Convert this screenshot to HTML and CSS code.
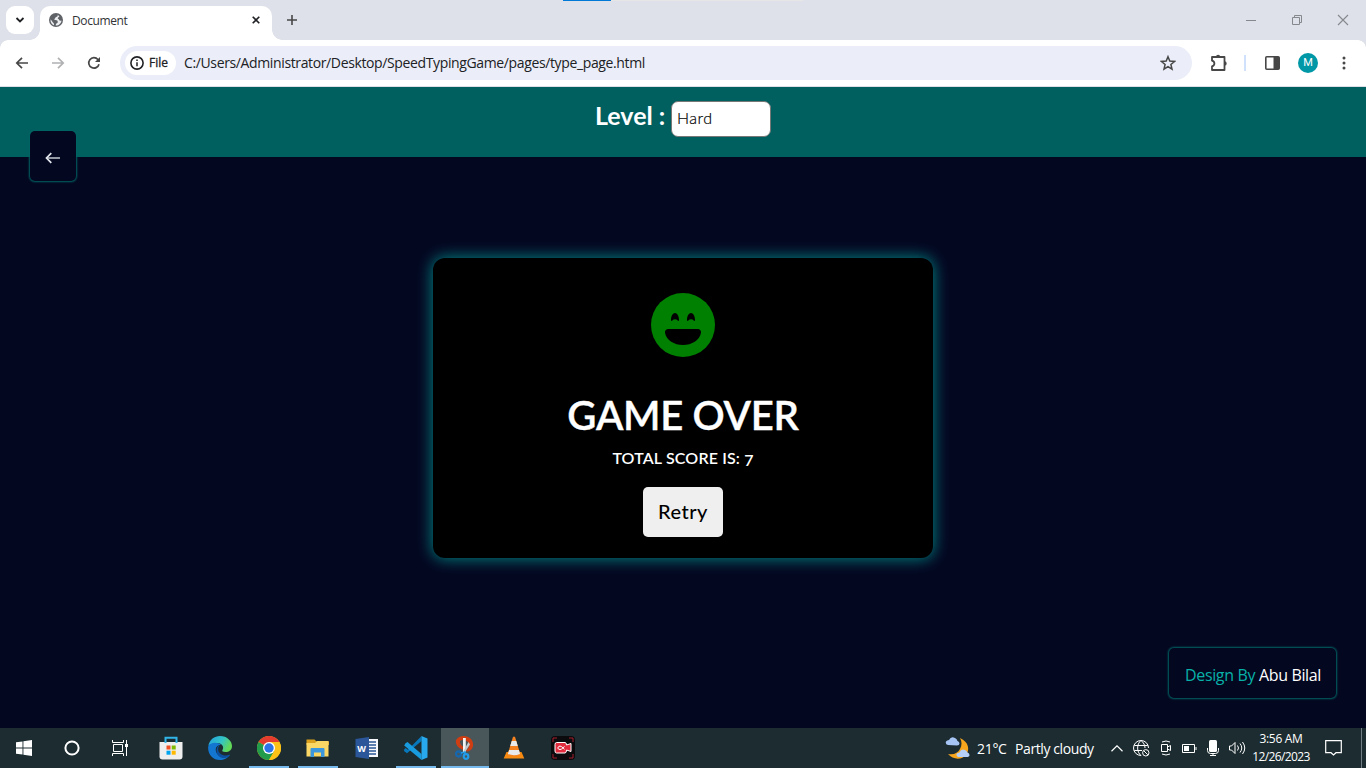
FILE: index.html
```html
<!DOCTYPE html>
<html lang="en">
<head>
<meta charset="utf-8">
<title>Document</title>
<link rel="stylesheet" href="styles.css">
</head>
<body>
<header class="tabstrip">
  <div class="tab-search"><svg width="10" height="6" viewBox="0 0 10 6"><path d="M1.500 1l3.500 3.500L8.500 1" fill="none" stroke="#202124" stroke-width="1.800"/></svg></div>
  <div class="tab">
    <svg class="globe" width="14" height="14" viewBox="0 0 14 14"><circle cx="7" cy="7" r="7" fill="#5f6368"/><path d="M8.300 1.500C9.300 2.300 8.800 3.600 7.300 4c-1 .3-.9 1.200-1.600 1.700-.8.500-.3 1.300.8 1.300 1.600 0 2.300.8 2.300 1.900 0 1.200-1.500 1.200-1.800 2.200l-.3 1.300c3 .2 5.600-2 5.800-5-.9.600-2.200.3-2.400-.6-.2-1-1.300-.7-1.300-1.600 0-.8 1.300-.9 1.600-1.900zM1.500 6.500C1.300 9.300 2.900 11.500 5 12.200c.2-1.200-.1-2-.8-2.500C3.200 9 3 7.600 1.500 6.500z" fill="#eceef0"/></svg>
    <span class="tab-title">Document</span>
    <svg class="tab-close" width="8" height="8" viewBox="0 0 8 8"><path d="M.7.700l6.600 6.600M7.300.700L.7 7.300" stroke="#202124" stroke-width="1.600"/></svg>
  </div>
  <svg class="new-tab" width="12" height="12" viewBox="0 0 12 12"><path d="M6 1v10M1 6h10" stroke="#474747" stroke-width="1.600"/></svg>
  <div class="load-line"><i></i></div>
  <div class="window-buttons">
    <svg width="12" height="12" viewBox="0 0 12 12"><path d="M1 6.500h10" stroke="#85888d"/></svg>
    <svg width="12" height="12" viewBox="0 0 12 12"><path d="M1.500 3.500h7v7h-7zM3.500 3.500v-2h7v7h-2" fill="none" stroke="#85888d"/></svg>
    <svg width="12" height="12" viewBox="0 0 12 12"><path d="M1 1l10 10M11 1L1 11" stroke="#85888d" stroke-width="1.100"/></svg>
  </div>
</header>

<nav class="toolbar">
  <svg class="nav-icon" width="14" height="12" viewBox="0 0 14 12"><path d="M13 6H2M7 .8L1.800 6 7 11.200" fill="none" stroke="#474747" stroke-width="1.700"/></svg>
  <svg class="nav-icon" width="14" height="12" viewBox="0 0 14 12"><path d="M1 6h11M7 .8L12.200 6 7 11.200" fill="none" stroke="#b0b1b3" stroke-width="1.700"/></svg>
  <svg class="nav-icon" width="14" height="14" viewBox="0 0 14 14"><path d="M12 8.200A5.200 5.200 0 1 1 10.900 3.500L12.500 5" fill="none" stroke="#474747" stroke-width="1.700"/><path d="M13 1v5H8z" fill="#474747"/></svg>
  <div class="omnibox">
    <div class="file-chip">
      <svg width="14" height="14" viewBox="0 0 14 14"><circle cx="7" cy="7" r="6.100" fill="none" stroke="#202124" stroke-width="1.600"/><path d="M7 6.300v4M7 3.400v1.600" stroke="#202124" stroke-width="1.500"/></svg>
      <span>File</span>
    </div>
    <span class="url">C:/Users/Administrator/Desktop/SpeedTypingGame/pages/type_page.html</span>
    <svg class="star" width="16" height="16" viewBox="0 0 16 16"><path d="M8 1.700l1.800 4.400 4.700.4-3.600 3 1.100 4.700L8 11.700l-4 2.500 1.100-4.700-3.600-3 4.700-.4z" fill="none" stroke="#474747" stroke-width="1.500"/></svg>
  </div>
  <svg class="puzzle" width="18" height="18" viewBox="0 0 18 18"><path d="M2 3h12.500v13H2v-3.600c3.200-1 3.200-4.800 0-5.700z" fill="none" stroke="#474747" stroke-width="1.800" stroke-linejoin="round"/><path d="M6 3a2.100 2.300 0 0 1 4.200 0zM14.500 7.200a2.200 2.200 0 0 1 0 4.400z" fill="#474747"/></svg>
  <i class="divider"></i>
  <svg class="panel" width="15" height="14" viewBox="0 0 15 14"><rect x=".8" y=".8" width="13.400" height="12.400" rx="1" fill="none" stroke="#474747" stroke-width="1.600"/><path d="M8.500 1H14v12H8.500z" fill="#474747"/></svg>
  <span class="avatar">M</span>
  <svg class="menu" width="4" height="14" viewBox="0 0 4 14"><g fill="#474747"><circle cx="2" cy="2" r="1.500"/><circle cx="2" cy="7" r="1.500"/><circle cx="2" cy="12" r="1.500"/></g></svg>
</nav>

<main class="page">
  <div class="level-bar">
    <span class="level-label">Level :</span>
    <div class="level-select">Hard</div>
  </div>
  <div class="back"><svg width="16" height="12" viewBox="0 0 16 12"><path d="M15 6H2.500" stroke="#aeb4bd" stroke-width="1.700"/><path d="M6.300 1.200L1.500 6l4.800 4.800" fill="none" stroke="#e4e8ee" stroke-width="1.700"/></svg></div>
  <section class="card">
    <svg class="smile" width="64" height="64" viewBox="0 0 64 64"><circle cx="32" cy="32" r="32" fill="#008000"/><path d="M17.500 36h29c2.500 0 4 1.800 3.400 4.200C48.500 47 41 52 32 52s-16.500-5-17.900-11.800C13.500 37.800 15 36 17.500 36zM20 27c0-4 1.800-7 4-7s4 3 4 7c0 1-.7 1.200-1.300.6-1.400-1.700-4-1.700-5.400 0-.6.6-1.300.4-1.300-.6zM36 27c0-4 1.800-7 4-7s4 3 4 7c0 1-.7 1.200-1.300.6-1.400-1.700-4-1.700-5.400 0-.6.6-1.300.4-1.300-.6z" fill="#000"/></svg>
    <h1>GAME OVER</h1>
    <p class="score">TOTAL SCORE IS: <span class="digit">7</span></p>
    <button class="retry">Retry</button>
  </section>
  <div class="credit"><span>Design By</span> Abu Bilal</div>
</main>

<footer class="taskbar">
  <div class="task sys"><svg width="16" height="16" viewBox="0 0 16 16"><path d="M0 2.300L6.500 1.400v6.100H0zM7.400 1.200L16 0v7.500H7.400zM0 8.500h6.500v6.100L0 13.700zM7.400 8.500H16V16l-8.600-1.200z" fill="#fff"/></svg></div>
  <div class="task sys"><svg width="16" height="16" viewBox="0 0 16 16"><circle cx="8" cy="8" r="6.600" fill="none" stroke="#fff" stroke-width="2"/></svg></div>
  <div class="task sys"><svg width="17" height="16" viewBox="0 0 17 16"><path d="M1.500 4.500h9v7h-9zM.5 0v2.500h11V0M.5 16v-2.500h11V16M14.500 0v16" fill="none" stroke="#fff"/><path d="M13 4h3v3h-3z" fill="#fff"/></svg></div>
  <div class="task store"><svg width="24" height="24" viewBox="0 0 24 24"><path d="M.5 6h23v14.500q0 3-3 3h-17q-3 0-3-3z" fill="#eeeeef"/><path d="M6.500 7V1.800h11V7" fill="none" stroke="#32b5e8" stroke-width="2"/><path d="M7.500 9.500h4v4h-4z" fill="#f25022"/><path d="M12.700 9.500h4v4h-4z" fill="#7fba00"/><path d="M7.500 14.700h4v4h-4z" fill="#00a4ef"/><path d="M12.700 14.700h4v4h-4z" fill="#ffb900"/></svg></div>
  <div class="task"><svg width="24" height="24" viewBox="0 0 24 24"><defs><linearGradient id="edge" x2="1" y2=".4"><stop stop-color="#229fe0"/><stop offset=".6" stop-color="#33c4c6"/><stop offset="1" stop-color="#62d858"/></linearGradient></defs><path d="M.3 10C1.500 3.500 6.500 0 12 0c7 0 12 5 12 10 0 4-3 6-6.500 6-2.500 0-4-1-3-2 2-3-.5-7-5-7C5 7 1 9 .3 10z" fill="url(#edge)"/><path d="M.2 10.500C1.500 6.500 10 5.500 13 9c-4 0-6 3-5 6.500 1.200 4.500 7 7 14 3C19.500 22.500 16 24 12 24 4.500 24-.5 18 .2 10.500z" fill="#1377d1"/><path d="M10.500 9.700C7 12.500 8 21 14.500 22c3 .4 6-1 7.700-3.300-6 2.300-12-.5-12-5.700 0-1.500.6-2.700 1.500-3.500z" fill="#0c4f9f"/></svg></div>
  <div class="task open"><svg width="24" height="24" viewBox="0 0 24 24"><circle cx="12" cy="12" r="12" fill="#fbc116"/><path d="M12 12L1.600 6A12 12 0 0 1 22.400 6z" fill="#e33b2e"/><path d="M12 12L1.600 6A12 12 0 0 0 12 24l5.200-9z" fill="#229b4a"/><path d="M12 6h10.400A12 12 0 0 1 12 24l5.500-9z" fill="#fbc116"/><circle cx="12" cy="12" r="6" fill="#fff"/><circle cx="12" cy="12" r="4.700" fill="#2c73e8"/></svg></div>
  <div class="task open"><svg width="23" height="20" viewBox="0 0 23 20"><path d="M.5 1.500h8l2 2H23V7H.5z" fill="#dca11c"/><path d="M.5 5H9l2-2h11.500v15.500H.5z" fill="#fbd766"/><path d="M4.500 19v-8q0-1 1-1h12q1 0 1 1v8H15v-4.500H8V19z" fill="#3d97dc"/></svg></div>
  <div class="task"><svg width="24" height="24" viewBox="0 0 24 24"><path d="M12 3h11v18H12z" fill="#f7f9fc"/><path d="M14 6h7M14 9h7M14 12h7M14 15h7M14 18h7" stroke="#2b5797" stroke-width="1.300"/><path d="M.5 3L14 1v22L.5 21z" fill="#2b579a"/><text class="word-letter" x="2.300" y="15.700">W</text></svg></div>
  <div class="task open"><svg width="24" height="24" viewBox="0 0 24 24"><path d="M17.500 0L4 13.800 1.500 11.900.2 13.300 0 15l3 2.300L17.500 5z" fill="#0878bc"/><path d="M1.500 7.200L3.500 6l14 12v6L.2 9.500z" fill="#199bdf"/><path d="M17.500 0l6 2.600v18.800l-6 2.600z" fill="#28a9ed"/></svg></div>
  <div class="task open active"><svg width="20" height="24" viewBox="0 0 20 24"><path d="M1 4C4-1 12-1 16 3c4 5 2 11-3 12.500l-3-.5c4-2 5-6 3-9-2-2-6-3-8-1 0 3 1 5 4 6v3C4 13 0 9 1 4z" fill="#cf3e12"/><path d="M8 2h2.800v14H8z" fill="#f2f3f3"/><path d="M13.500 6l1.500 2.500L9.500 17l-1-2z" fill="#c3c8ca"/><circle cx="3.500" cy="18" r="2.500" fill="none" stroke="#1767ae" stroke-width="2.300"/><circle cx="11" cy="20.500" r="2.300" fill="none" stroke="#219cea" stroke-width="2.200"/><path d="M6 17l4-1v3" fill="none" stroke="#219cea" stroke-width="1.500"/></svg></div>
  <div class="task vlc"><svg width="22" height="24" viewBox="0 0 22 24"><path d="M3.500 16h15l2.800 6.500H.7z" fill="#f78b12"/><path d="M10 .8h2l5.500 18q-6.500 3-13 0z" fill="#f58220"/><path d="M8.700 5h4.600l1.500 5H7.200zM6.100 14h9.800l1.200 4q-6.100 2.400-12.200 0z" fill="#e8eaec"/></svg></div>
  <div class="task"><svg width="24" height="24" viewBox="0 0 24 24"><rect width="24" height="24" rx="4" fill="#0b0b0d"/><path d="M2 6V2h4M18 2h4v4M2 18v4h4M18 22h4v-4" fill="none" stroke="#a51e2d"/><path d="M5.500 6.500H14q1.500 0 1.500 2.500l4.500-1.500v8L15.500 14q0 3-1.500 3H5.500q-1.500 0-1.500-2V8.500q0-2 1.500-2z" fill="#e22c3e" stroke="#fff"/><path d="M10.500 10.700q-1.500-1.400-3 0t0 2.400 3 0l3-2.600M10.500 10.500l3 2.800" fill="none" stroke="#fff"/></svg></div>

  <div class="weather">
    <svg width="25" height="23" viewBox="0 0 25 23"><path d="M15 1c9 4 10 12 6 17s-13 5-18-1c6 1 10-1 12-5s2-7 0-11z" fill="#f6a51d"/><path d="M3 8q-3-1-2-3.500Q2 3 4 3 6-1 10 1q2 1 2.500 3 2 .5 2 2.500T12 8.500z" fill="#a6c4f4"/><path d="M13 20q-2-1-1.500-3 1-1.500 3-1.500 1.500-4 5.500-2.500 2 1 2.500 2.500 2 .5 2 2.500t-3 2z" fill="#b5cff6"/></svg>
    <span class="temp">21°C</span><span class="sky">Partly cloudy</span>
  </div>
  <div class="tray">
    <svg width="12" height="7" viewBox="0 0 12 7"><path d="M.5 6.200L6 .8l5.500 5.400" fill="none" stroke="#fff" stroke-width="1.200"/></svg>
    <svg width="17" height="17" viewBox="0 0 17 17"><g fill="none" stroke="#fff"><path d="M8 15.500A7.500 7.500 0 1 1 15.500 8M8 15.500C3.500 12 3.500 4 8 .5c2.800 2 4 5 4 7.500M1.300 5.500h13.500M1.300 10.500H9"/><circle cx="12.800" cy="12.800" r="3.200"/><path d="M10.800 10.800l4 4"/></g></svg>
    <svg width="12" height="16" viewBox="0 0 12 16"><path d="M1.500 4.500h6v7h-6zM7.500 7l3-1.500v5l-3-1.500M2 2q4-2 8 0M2 14q4 2 8 0" fill="none" stroke="#fff"/></svg>
    <svg width="15" height="9" viewBox="0 0 15 9"><path d="M.5.500h12v8H.5zM14 3v3" fill="none" stroke="#fff"/><path d="M2 2h5v5H2z" fill="#fff"/></svg>
    <svg width="12" height="16" viewBox="0 0 12 16"><rect x="2" width="8" height="12" rx="1.500" fill="#fff"/><path d="M.5 8v2.500q0 3 3 3h5q3 0 3-3V8M6 13v2.500M3 15.500h6" fill="none" stroke="#fff"/></svg>
    <svg width="17" height="14" viewBox="0 0 17 14"><path d="M.5 5h2L6 1.500v11L2.500 9h-2zM8.500 4.500q2 2.500 0 5M11 2.500q3.500 4.500 0 9M13.500 1q4.500 6 0 12" fill="none" stroke="#fff"/></svg>
  </div>
  <div class="clock"><span class="time">3:56 AM</span><span class="date">12/26/2023</span></div>
  <svg class="notice" width="17" height="16" viewBox="0 0 17 16"><path d="M.7.700h15.600v12H11L8.500 15 6 12.700H.7z" fill="none" stroke="#fff" stroke-width="1.200"/></svg>
  <i class="desktop-edge"></i>
</footer>
</body>
</html>
```
FILE: styles.css
```css
* { box-sizing: border-box; }
body { margin: 0; width: 1366px; height: 768px; overflow: hidden; display: flex; flex-direction: column; font-family: "Open Sans", "Noto Sans", sans-serif; background: #040720; }
svg { display: block; flex: none; }

.tabstrip { position: relative; height: 40px; flex: none; display: flex; align-items: center; padding-left: 6px; background: #dee1e9; }
.tab-search { width: 28px; height: 28px; border-radius: 9px; background: #fff; display: flex; align-items: center; justify-content: center; }
.tab { position: relative; align-self: flex-end; width: 232px; height: 34px; margin-left: 6px; padding: 0 12px 6px 9px; display: flex; align-items: center; background: #fff; border-radius: 10px 10px 0 0; }
.tab::before, .tab::after { content: ""; position: absolute; bottom: 0; width: 10px; height: 10px; }
.tab::before { left: -10px; background: radial-gradient(circle at 0 0, transparent 9.500px, #fff 10px); }
.tab::after { right: -10px; background: radial-gradient(circle at 100% 0, transparent 9.500px, #fff 10px); }
.tab-title { margin-left: 9px; padding-top: 1px; font-size: 12px; line-height: 16px; letter-spacing: -.4px; color: #303236; }
.tab-close { margin-left: auto; }
.new-tab { margin-left: 14px; }
.load-line { position: absolute; left: 563px; top: 0; width: 240px; height: 1px; background: #e6e6e6; }
.load-line i { display: block; width: 48px; height: 1px; background: #0078d7; }
.window-buttons { margin-left: auto; display: flex; gap: 34px; padding-right: 17px; }

.toolbar { position: relative; height: 47px; flex: none; display: flex; align-items: center; padding: 0 20px 1px 15px; background: #fff; border-bottom: 1px solid #dcdfe3; }
.toolbar::before, .toolbar::after { content: ""; position: absolute; top: 0; width: 8px; height: 8px; }
.toolbar::before { left: 0; background: radial-gradient(circle at 100% 100%, transparent 7.500px, #dee1e9 8px); }
.toolbar::after { right: 0; background: radial-gradient(circle at 0 100%, transparent 7.500px, #dee1e9 8px); }
.nav-icon { margin-right: 22px; }
.omnibox { width: 1072px; height: 34px; margin-left: -3px; padding: 0 16px 0 5px; display: flex; align-items: center; border-radius: 17px; background: #ebeef8; }
.file-chip { width: 51px; height: 24px; border-radius: 12px; background: #fff; display: flex; align-items: center; padding-left: 5px; gap: 5px; font-size: 12px; color: #202124; -webkit-text-stroke: .3px #202124; }
.url { margin-left: 8px; font-size: 14px; letter-spacing: -.37px; color: #202124; white-space: nowrap; }
.star { margin-left: auto; }
.puzzle { margin-left: 18px; }
.divider { width: 2px; height: 16px; margin-left: 16px; background: #d0e2fb; }
.panel { margin-left: 19px; }
.avatar { width: 20px; height: 20px; margin-left: 18px; border-radius: 50%; background: #0097a7; color: #fff; font: 11px/20px Roboto, sans-serif; text-align: center; }
.menu { margin-left: auto; }

.page { position: relative; flex: 1; display: flex; flex-direction: column; align-items: center; background: #040720; font-family: Lato, sans-serif; }
.level-bar { width: 100%; height: 70px; padding-top: 14px; display: flex; justify-content: center; gap: 4px; background: #00605f; }
.level-label { width: 72px; font-size: 25px; line-height: 28px; font-weight: 700; letter-spacing: 0; white-space: nowrap; color: #fff; }
.level-select { width: 100px; height: 36px; border: 1px solid #777; border-radius: 7px; background: #fff; padding-left: 5px; font-size: 16px; line-height: 32px; font-weight: 300; letter-spacing: .5px; color: #000; -webkit-text-stroke: .2px #000; }
.back { position: absolute; left: 30px; top: 44px; width: 46px; height: 50px; border-radius: 5px; background: #040720; box-shadow: 0 0 2px 1px #006565; display: flex; align-items: center; justify-content: center; padding-top: 4px; }
.card { width: 500px; height: 300px; margin-top: 101px; padding-top: 35px; display: flex; flex-direction: column; align-items: center; border-radius: 12px; background: #000; box-shadow: 0 0 15px 1px #008080; color: #fff; }
h1 { margin: 34px 0 0; font-size: 40px; line-height: 48px; font-weight: 600; letter-spacing: -.3px; white-space: nowrap; -webkit-text-stroke: .4px #fff; }
.score { margin: 9px 0 0; font-size: 16px; line-height: 20px; font-weight: 600; letter-spacing: .15px; white-space: nowrap; }
.digit { display: inline-block; transform: translateY(2px); }
.retry { width: 80px; height: 50px; margin-top: 19px; padding: 0 0 2px; border: 0; border-radius: 5px; background: #efefef; color: #000; font: 500 20px/48px Lato, sans-serif; letter-spacing: .5px; }
.credit { position: absolute; left: 1169px; top: 561px; width: 167px; height: 50px; border-radius: 5px; background: #040720; box-shadow: 0 0 2px 1px #006565; padding: 2px 0 0 16px; font: 16px/50px "Open Sans", sans-serif; letter-spacing: -.35px; white-space: nowrap; color: #fff; }
.credit span { color: #08b0a8; }

.taskbar { position: relative; height: 40px; flex: none; display: flex; align-items: stretch; background: #1c2c31; color: #fff; }
.task { position: relative; width: 49px; display: flex; align-items: center; justify-content: center; }
.task.sys { width: 48px; }
.store { margin-left: 2px; }
.task.open::after { content: ""; position: absolute; left: 5px; right: 4px; bottom: 0; height: 2px; background: #76b9ed; }
.task.active { width: 48px; margin-left: 1px; background: #49565a; }
.task.active::after { left: 0; right: 0; }
.word-letter { font: bold 9px "Open Sans", sans-serif; fill: #fff; }
.weather { position: absolute; left: 945px; top: 0; height: 40px; display: flex; align-items: center; font-size: 14px; white-space: nowrap; }
.weather span { padding-top: 1px; }
.temp { width: 30px; margin-left: 7px; letter-spacing: -.3px; }
.sky { margin-left: 8px; letter-spacing: -.4px; }
.tray { margin-left: auto; margin-right: 6px; display: flex; align-items: center; gap: 10px; }
.clock { width: 58px; margin-right: 2px; display: flex; flex-direction: column; align-items: center; justify-content: center; font-size: 12px; line-height: 18px; letter-spacing: -.6px; white-space: nowrap; }
.time { letter-spacing: -.3px; }
.notice { align-self: center; margin-left: 13px; }
.desktop-edge { width: 1px; margin: 0 4px 0 19px; background: #727e81; }
```
